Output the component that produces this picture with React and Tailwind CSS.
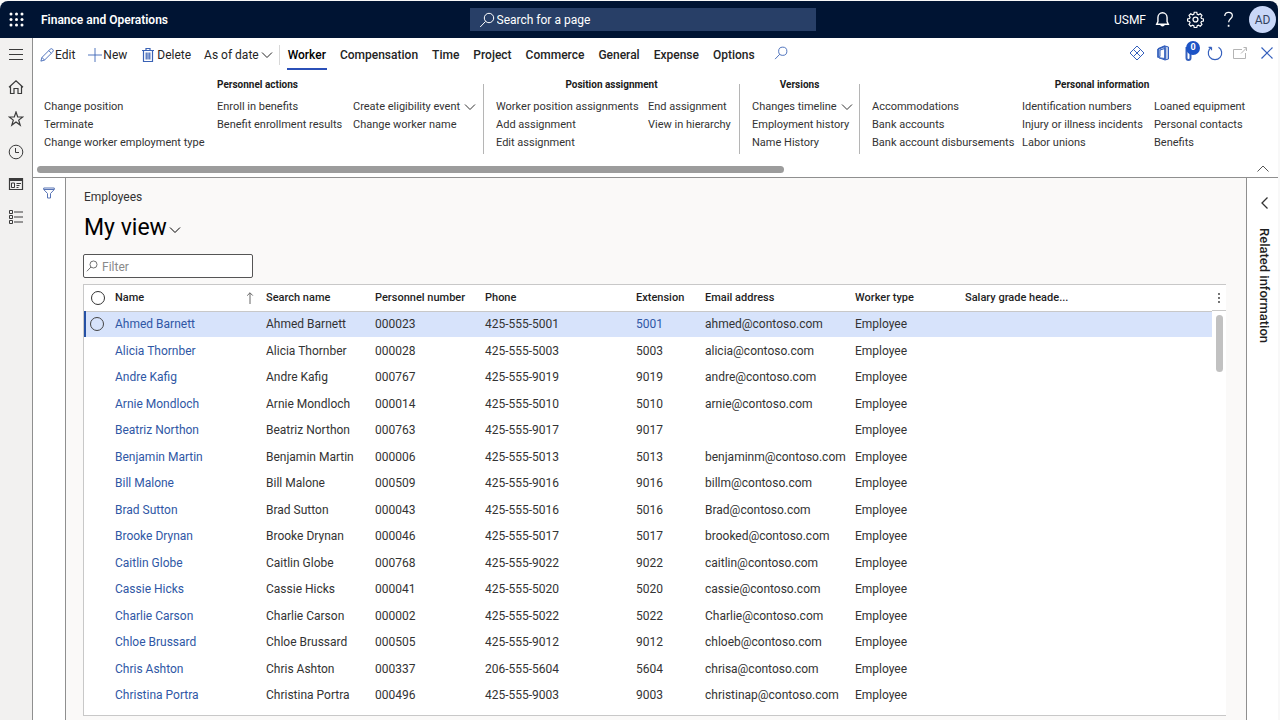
import React from 'react';

const employees = [
    { name: 'Ahmed Barnett', number: '000023', phone: '425-555-5001', ext: '5001', email: 'ahmed@contoso.com' },
    { name: 'Alicia Thornber', number: '000028', phone: '425-555-5003', ext: '5003', email: 'alicia@contoso.com' },
    { name: 'Andre Kafig', number: '000767', phone: '425-555-9019', ext: '9019', email: 'andre@contoso.com' },
    { name: 'Arnie Mondloch', number: '000014', phone: '425-555-5010', ext: '5010', email: 'arnie@contoso.com' },
    { name: 'Beatriz Northon', number: '000763', phone: '425-555-9017', ext: '9017', email: '' },
    { name: 'Benjamin Martin', number: '000006', phone: '425-555-5013', ext: '5013', email: 'benjaminm@contoso.com' },
    { name: 'Bill Malone', number: '000509', phone: '425-555-9016', ext: '9016', email: 'billm@contoso.com' },
    { name: 'Brad Sutton', number: '000043', phone: '425-555-5016', ext: '5016', email: 'Brad@contoso.com' },
    { name: 'Brooke Drynan', number: '000046', phone: '425-555-5017', ext: '5017', email: 'brooked@contoso.com' },
    { name: 'Caitlin Globe', number: '000768', phone: '425-555-9022', ext: '9022', email: 'caitlin@contoso.com' },
    { name: 'Cassie Hicks', number: '000041', phone: '425-555-5020', ext: '5020', email: 'cassie@contoso.com' },
    { name: 'Charlie Carson', number: '000002', phone: '425-555-5022', ext: '5022', email: 'Charlie@contoso.com' },
    { name: 'Chloe Brussard', number: '000505', phone: '425-555-9012', ext: '9012', email: 'chloeb@contoso.com' },
    { name: 'Chris Ashton', number: '000337', phone: '206-555-5604', ext: '5604', email: 'chrisa@contoso.com' },
    { name: 'Christina Portra', number: '000496', phone: '425-555-9003', ext: '9003', email: 'christinap@contoso.com' },
];

const tabs = ['Worker', 'Compensation', 'Time', 'Project', 'Commerce', 'General', 'Expense', 'Options'];

const groups = [
    {
        title: 'Personnel actions',
        size: 'w-[451px] pl-[11px] border-r',
        grid: 'grid-cols-[173px_136px_auto]',
        columns: [
            ['Change position', 'Terminate', 'Change worker employment type'],
            ['Enroll in benefits', 'Benefit enrollment results'],
            ['Create eligibility event', 'Change worker name'],
        ],
    },
    {
        title: 'Position assignment',
        size: 'w-[256px] pl-3 border-r',
        grid: 'grid-cols-[152px_auto]',
        columns: [
            ['Worker position assignments', 'Add assignment', 'Edit assignment'],
            ['End assignment', 'View in hierarchy'],
        ],
    },
    {
        title: 'Versions',
        size: 'w-[120px] pl-3 border-r',
        grid: 'grid-cols-[auto]',
        columns: [['Changes timeline', 'Employment history', 'Name History']],
    },
    {
        title: 'Personal information',
        size: 'w-[484px] pl-3',
        grid: 'grid-cols-[150px_132px_auto]',
        columns: [
            ['Accommodations', 'Bank accounts', 'Bank account disbursements'],
            ['Identification numbers', 'Injury or illness incidents', 'Labor unions'],
            ['Loaned equipment', 'Personal contacts', 'Benefits'],
        ],
    },
];

const withMenu = ['Create eligibility event', 'Changes timeline'];

const Icon = ({ children, className = 'size-4', box = 16 }) => (
    <svg
        viewBox={`0 0 ${box} ${box}`}
        className={`${className} shrink-0`}
        fill="none"
        stroke="currentColor"
        strokeWidth="1"
        aria-hidden="true"
    >
        {children}
    </svg>
);

const Chevron = ({ className = 'size-3' }) => (
    <Icon className={className} box={12}>
        <path d="M1 3.5 6 8.5 11 3.5" />
    </Icon>
);

const Magnifier = ({ className = 'size-4' }) => (
    <Icon className={className}>
        <circle cx="10" cy="6" r="4.7" />
        <path d="M6.6 9.4 1.2 15" />
    </Icon>
);

const sideItems = [
    {
        label: 'Expand the navigation pane',
        icon: <path d="M1 3.5h14M1 8.5h14M1 13.5h14" />,
    },
    {
        label: 'Home',
        icon: <path d="M2.5 7v7.500h3.500V9.500h4v5h3.500V7M1 8.200 8 1.800l7 6.400" strokeWidth="1.2" />,
    },
    {
        label: 'Favorites',
        icon: <path d="m8 1 1.700 5h5l-4 3.100 1.500 5L8 11l-4.200 3.100 1.500-5L1.300 6h5z" strokeWidth="1.2" />,
    },
    {
        label: 'Recent',
        icon: (
            <>
                <circle cx="8" cy="8" r="6.8" />
                <path d="M7.5 4v4.5H11" />
            </>
        ),
    },
    {
        label: 'Workspaces',
        icon: (
            <>
                <path d="M1.5 2.5h13v11h-13z" strokeWidth="1.2" />
                <path d="M1.5 4h13" strokeWidth="2" />
                <path d="M3.5 7h3v4.500h-3zM8.500 7.500h4.500M8.500 9.500h3M8.500 11.500h2" />
            </>
        ),
    },
    {
        label: 'Modules',
        icon: (
            <>
                <path d="M1.500 1.500h3v3h-3zM1.500 6.500h3v3h-3zM1.500 11.500h3v3h-3z" />
                <path d="M6 3h9M6 8h9M6 13h9" strokeWidth="1.2" />
            </>
        ),
    },
];

const TopBar = () => (
    <header className="flex h-[37px] items-center rounded-t-lg bg-[#001433] pl-[9px] text-white">
        <div className="flex flex-1 items-center">
            <button aria-label="App launcher" className="mr-4 flex size-4 items-center justify-center">
                <svg viewBox="0 0 16 16" className="size-4" fill="currentColor" aria-hidden="true">
                    {[2, 7.5, 13].map((y) => [2, 7.5, 13].map((x) => <circle key={`${x}-${y}`} cx={x} cy={y} r="1.5" />))}
                </svg>
            </button>
            <span className="text-[12px] font-semibold">Finance and Operations</span>
        </div>
        <label className="flex h-[23px] w-[346px] items-center gap-0.5 bg-[#283f67] pr-2 pl-[9px]">
            <Magnifier />
            <input
                type="text"
                aria-label="Search for a page"
                placeholder="Search for a page"
                className="w-full bg-transparent pt-px text-[12px] text-white outline-none placeholder:text-white"
            />
        </label>
        <div className="flex flex-1 items-center justify-end pr-0.5">
            <span className="mr-2 text-[12px]">USMF</span>
            <button aria-label="Notifications" className="mr-4">
                <Icon className="size-[17px]">
                    <path d="M2.500 12.500h11L12.300 10V6a4.300 4.300 0 0 0-8.600 0v4zM6.300 12.700a1.800 1.800 0 0 0 3.400 0" strokeWidth="1.3" />
                </Icon>
            </button>
            <button aria-label="Settings" className="mr-4">
                <Icon className="size-[17px]">
                    <circle cx="8" cy="8" r="2.300" strokeWidth="1.2" />
                    <path
                        d="M6.800 1.200h2.400l.4 1.900 1.200.5 1.700-1 1.600 1.600-1 1.700.5 1.200 1.900.4v1.900l-1.900.4-.5 1.200 1 1.700-1.600 1.600-1.700-1-1.200.5-.4 1.900H6.800l-.4-1.900-1.200-.5-1.700 1-1.600-1.600 1-1.700-.5-1.200L.5 9.400V7.500l1.900-.4.5-1.200-1-1.700 1.600-1.600 1.700 1 1.200-.5z"
                        strokeWidth="1.100"
                    />
                </Icon>
            </button>
            <button aria-label="Help" className="mr-3">
                <Icon className="size-[17px]">
                    <path d="M4.500 4.800C4.500 2.600 6 1.200 8.100 1.200s3.500 1.300 3.500 3.200c0 2.800-3.500 3.200-3.500 6.300" strokeWidth="1.200" />
                    <path d="M8.100 13v1.800" strokeWidth="1.600" />
                </Icon>
            </button>
            <button className="flex size-[27px] items-center justify-center rounded-full bg-[#c9d7f8] text-[12px] text-[#33425f]">
                AD
            </button>
        </div>
    </header>
);

const ActionBar = () => (
    <div className="flex h-[34px] items-center pl-[7px] text-[12px] text-[#242424]">
        <button className="mr-[13px] flex items-center gap-px">
            <Icon className="size-[14px] text-[#3a62b5]">
                <path d="m1 15 1.200-4.200L11.500 1.500a2 2 0 0 1 3 3L5.200 13.800zM10 3l3 3M2.200 10.800l3 3" />
            </Icon>
            Edit
        </button>
        <button className="mr-[13px] flex items-center gap-px">
            <Icon className="size-[14px] text-[#3a62b5]">
                <path d="M8 0v16M0 8h16" />
            </Icon>
            New
        </button>
        <button className="mr-[13px] flex items-center gap-px">
            <Icon className="size-4 text-[#3a62b5]">
                <path d="M2 3.500h12M6 3.500v-2h4v2M3.500 3.500v11h9v-11M6.200 5.500v7M8 5.500v7M9.800 5.500v7" strokeWidth="1.200" />
            </Icon>
            Delete
        </button>
        <button className="flex items-center gap-0.5">
            As of date
            <Chevron />
        </button>
        <span className="mr-[7px] ml-1.5 h-5 w-px bg-[#d8d8d8]" />
        <nav className="flex gap-3 font-medium">
            {tabs.map((tab) => (
                <button
                    key={tab}
                    className={`border-b-2 px-px pt-[5px] pb-1 ${tab === 'Worker' ? 'border-[#2b50b8] text-black' : 'border-transparent'}`}
                >
                    {tab}
                </button>
            ))}
        </nav>
        <button aria-label="Search actions" className="mb-1 ml-[18px] text-[#3a62b5]">
            <Magnifier className="size-[14px]" />
        </button>
        <div className="mb-1 ml-auto flex items-center gap-[9px] pr-[3px] text-[#3560bd]">
            <button aria-label="Power Apps">
                <Icon>
                    <path d="M8 1 15 8l-7 7-7-7zM4.500 4.500l7 7M11.500 4.500l-7 7M8 1l3.500 3.500" />
                </Icon>
            </button>
            <button aria-label="Open in Office" className="mr-1 ml-px">
                <Icon>
                    <path d="M3 4v8.500l2-1V5l5-1.500v10L4 12.800 10 15l3.500-1V2L10 1z" fill="currentColor" fillOpacity="0.35" />
                    <path d="M10 1v14M3 4l7-3M3 4v8.500" strokeWidth="1.500" />
                </Icon>
            </button>
            <button aria-label="Attachments" className="relative -mr-0.5 h-4 w-4">
                <Icon>
                    <path d="M2.500 2v11a2 2 0 0 0 4 0V6" strokeWidth="2" />
                </Icon>
                <span className="absolute -top-1 left-0.5 flex size-[14px] items-center justify-center rounded-full bg-[#1c53c5] text-[9px] font-bold text-white">
                    0
                </span>
            </button>
            <button aria-label="Refresh">
                <Icon>
                    <path d="M11.500 2.300a6.700 6.700 0 1 1-7 0M4.500 2.300H1.600M4.500 2.300v3" strokeWidth="1.200" />
                </Icon>
            </button>
            <button aria-label="Open in new window" className="text-[#b4b4b4]">
                <Icon>
                    <path d="M10 4.500H1.500v9h12V8M9 8.500l5.500-5.500M11.500 2.500h3V6" />
                </Icon>
            </button>
            <button aria-label="Close" className="ml-0.5">
                <Icon>
                    <path d="m2.500 2.500 11 11M13.500 2.500l-11 11" strokeWidth="1.200" />
                </Icon>
            </button>
        </div>
    </div>
);

const Ribbon = () => (
    <div className="relative border-b border-[#8f8f8f] pb-1">
        <div className="flex overflow-hidden pt-3">
            {groups.map((group) => (
                <section key={group.title} className={`h-[70px] shrink-0 border-[#b5b5b5] ${group.size}`}>
                    <h2 className="-mt-2 -ml-3 mb-1 text-center text-[10px] leading-[18px] font-bold text-[#1b1b1b]">
                        {group.title}
                    </h2>
                    <div className={`grid ${group.grid}`}>
                        {group.columns.map((column) => (
                            <ul key={column[0]}>
                                {column.map((item) => (
                                    <li key={item} className="h-[18px]">
                                        <button className="flex items-center gap-1 text-[11px] leading-[18px] whitespace-nowrap text-[#333333]">
                                            {item}
                                            {withMenu.includes(item) && <Chevron />}
                                        </button>
                                    </li>
                                ))}
                            </ul>
                        ))}
                    </div>
                </section>
            ))}
        </div>
        <div className="mt-3 ml-1 h-[7px] w-[60%] rounded-full bg-[#9c9c9c]" />
        <button aria-label="Collapse" className="absolute right-[9px] bottom-0.5 text-[#555555]">
            <Icon className="size-3" box={12}>
                <path d="M.5 8.500 6 3l5.500 5.500" />
            </Icon>
        </button>
    </div>
);

const EmployeeTable = () => (
    <div className="flex border-y border-l border-[#c8c8c8] bg-white">
        <table className="flex-1 table-fixed text-left">
            <colgroup>
                <col className="w-[30px]" />
                <col className="w-[151px]" />
                <col className="w-[109px]" />
                <col className="w-[110px]" />
                <col className="w-[151px]" />
                <col className="w-[69px]" />
                <col className="w-[150px]" />
                <col className="w-[110px]" />
                <col />
            </colgroup>
            <thead>
                <tr className="h-[26px] border-b border-[#c8c8c8] text-[11px] text-[#1f1f1f] [&>th]:font-medium">
                    <th>
                        <input type="radio" aria-label="Select all" className="ml-1.5 block size-[14px] appearance-none rounded-full border border-[#333333]" />
                    </th>
                    <th>
                        <div className="flex items-center justify-between pr-2.5">
                            Name
                            <Icon className="h-3 w-3 text-[#666666]" box={12}>
                                <path d="M6 12V.8M3.200 3.600 6 .8l2.800 2.800" />
                            </Icon>
                        </div>
                    </th>
                    <th>Search name</th>
                    <th>Personnel number</th>
                    <th>Phone</th>
                    <th>Extension</th>
                    <th>Email address</th>
                    <th>Worker type</th>
                    <th>Salary grade heade...</th>
                </tr>
            </thead>
            <tbody className="text-[12px] text-[#333333]">
                {employees.map((row, i) => (
                    <tr key={row.number} className={`odd:h-[26px] even:h-[27px] ${i === 0 ? 'bg-[#d7e3fb]' : ''}`}>
                        <td className={i === 0 ? 'border-l-2 border-[#2450a4]' : ''}>
                            {i === 0 && (
                                <input type="radio" aria-label={`Select ${row.name}`} className="ml-1 block size-[14px] appearance-none rounded-full border border-[#444444]" />
                            )}
                        </td>
                        <td>
                            <a href="#" className="text-[#2f57a5]">{row.name}</a>
                        </td>
                        <td>{row.name}</td>
                        <td>{row.number}</td>
                        <td>{row.phone}</td>
                        <td className={i === 0 ? 'text-[#2f57a5]' : ''}>{row.ext}</td>
                        <td>{row.email}</td>
                        <td>Employee</td>
                        <td></td>
                    </tr>
                ))}
                <tr className="h-[7px]">
                    <td colSpan={9}></td>
                </tr>
            </tbody>
        </table>
        <div className="w-[14px]">
            <button aria-label="Grid options" className="flex h-[26px] w-full items-center justify-center border-b border-[#c8c8c8]">
                <svg viewBox="0 0 4 12" className="h-3 w-1" fill="#333333" aria-hidden="true">
                    <circle cx="2" cy="2" r="0.900" />
                    <circle cx="2" cy="6" r="0.900" />
                    <circle cx="2" cy="10" r="0.900" />
                </svg>
            </button>
            <div className="mx-auto mt-1 h-[57px] w-[7px] rounded-full bg-[#c1c1c1]" />
        </div>
    </div>
);

const App = () => (
    <div className="flex min-h-screen flex-col bg-[#f8f8f8] pt-px pr-0.5 font-['Roboto','Noto_Sans',sans-serif]">
        <TopBar />
        <div className="flex flex-1">
            <aside className="w-[33px] shrink-0 border-r border-[#8f8f8f] bg-[#f2f1f0]">
                <nav className="mt-2 flex h-[179px] flex-col items-center justify-between text-[#3b3b3b]">
                    {sideItems.map((item) => (
                        <button key={item.label} aria-label={item.label}>
                            <Icon>{item.icon}</Icon>
                        </button>
                    ))}
                </nav>
            </aside>
            <div className="flex min-w-0 flex-1 flex-col bg-white">
                <ActionBar />
                <Ribbon />
                <div className="flex flex-1">
                    <div className="w-[33px] shrink-0 border-r border-[#8f8f8f] pt-1 pl-2.5">
                        <button aria-label="Show filters" className="text-[#5874b5]">
                            <Icon className="size-3" box={12}>
                                <path d="M.7 1h10.600v1.500L7.500 6.500V11h-3V6.500L.7 2.500zM1 2.500h10" />
                            </Icon>
                        </button>
                    </div>
                    <main className="min-w-0 flex-1 bg-[#faf9f8] pr-5 pl-[17px]">
                        <p className="pt-[11px] pl-px text-[12px] leading-4 text-[#333333]">Employees</p>
                        <button className="mt-[9px] flex items-center gap-0.5 pl-px text-[23px] leading-7 text-black">
                            My view
                            <Chevron className="mt-1 size-3" />
                        </button>
                        <label className="mt-3 mb-1.5 flex h-6 w-[170px] items-center gap-1 rounded-xs border border-[#555555] bg-white px-0.5 text-[#444444]">
                            <Magnifier className="size-3" />
                            <input
                                type="text"
                                aria-label="Filter"
                                placeholder="Filter"
                                className="w-full bg-transparent pt-0.5 text-[12px] outline-none placeholder:text-[#8a8a8a]"
                            />
                        </label>
                        <EmployeeTable />
                    </main>
                    <aside className="flex w-8 shrink-0 flex-col items-center border-l border-[#8f8f8f] pt-[18px] pl-1">
                        <button aria-label="Expand related information" className="text-[#333333]">
                            <Icon className="size-3.5" box={14}>
                                <path d="M9.500 1.500 4 7l5.500 5.500" strokeWidth="1.300" />
                            </Icon>
                        </button>
                        <span className="mt-[18px] text-[13px] font-medium text-[#1f1f1f] [writing-mode:vertical-rl]">Related information</span>
                    </aside>
                </div>
            </div>
        </div>
    </div>
);

export default App;
